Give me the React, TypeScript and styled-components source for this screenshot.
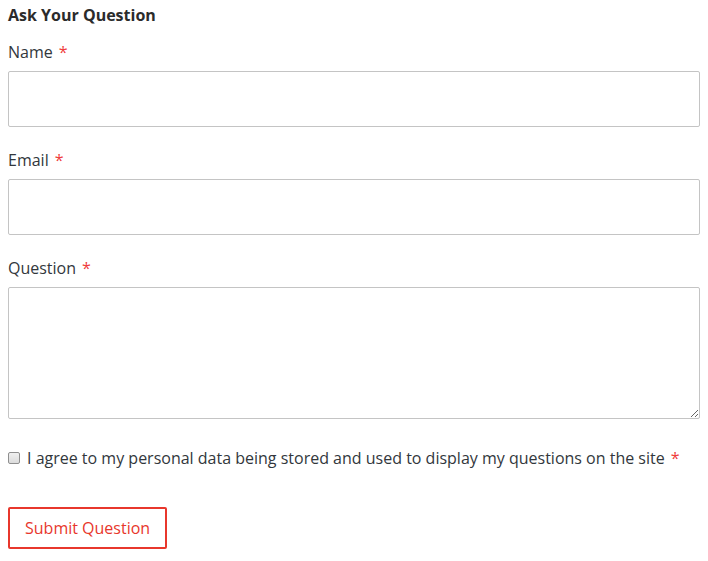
import React from "react";
import styled, { createGlobalStyle } from "styled-components";

const Global = createGlobalStyle`
  html, body { margin: 0; padding: 0; background: #fff; }
  body { font-family: "Open Sans", "Liberation Sans", sans-serif; color: #32373c; }
  * { box-sizing: border-box; }
`;

const Form = styled.form`
  display: flex;
  flex-direction: column;
  padding: 4px 8px 8px 8px;
  width: 708px;
`;

const Title = styled.h3`
  margin: 0 0 14px 0;
  font-size: 16px;
  line-height: 22px;
  font-weight: 700;
  color: #2b2b2b;
`;

const Field = styled.div`
  display: flex;
  flex-direction: column;
  margin-bottom: 21px;
`;

const Label = styled.label`
  font-size: 16px;
  line-height: 24px;
  margin-bottom: 7px;
  color: #32373c;
`;

const Req = styled.span`
  color: #ef3b3b;
  margin-left: 6px;
`;

const Input = styled.input`
  width: 692px;
  height: 56px;
  border: 1px solid #c4c4c4;
  border-radius: 2px;
  padding: 8px 12px;
  font: inherit;
`;

const TextArea = styled.textarea`
  width: 692px;
  height: 132px;
  border: 1px solid #c4c4c4;
  border-radius: 2px;
  padding: 8px 12px;
  font: inherit;
  resize: vertical;
`;

const Consent = styled.label`
  display: flex;
  align-items: center;
  margin-top: 6px;
  font-size: 16px;
  line-height: 24px;
  color: #32373c;
`;

const Check = styled.input`
  appearance: none;
  margin: 0 7px 0 0;
  width: 12px;
  height: 12px;
  border: 1px solid #8f8f8f;
  border-radius: 2px;
  background: linear-gradient(#f0f0f0, #dcdcdc);
  flex: none;
`;

const Button = styled.button`
  align-self: flex-start;
  margin-top: 37px;
  height: 42px;
  padding: 0 15px;
  background: #fff;
  border: 2px solid #e8372c;
  border-radius: 2px;
  color: #e8372c;
  font-family: "Open Sans", "Liberation Sans", sans-serif;
  font-size: 16px;
`;

export default function App() {
  return (
    <>
      <Global />
      <Form onSubmit={(e) => e.preventDefault()}>
        <Title>Ask Your Question</Title>
        <Field>
          <Label>Name<Req>*</Req></Label>
          <Input type="text" />
        </Field>
        <Field>
          <Label>Email<Req>*</Req></Label>
          <Input type="email" />
        </Field>
        <Field>
          <Label>Question<Req>*</Req></Label>
          <TextArea />
        </Field>
        <Consent>
          <Check type="checkbox" />
          I agree to my personal data being stored and used to display my questions on the site<Req>*</Req>
        </Consent>
        <Button type="submit">Submit Question</Button>
      </Form>
    </>
  );
}
